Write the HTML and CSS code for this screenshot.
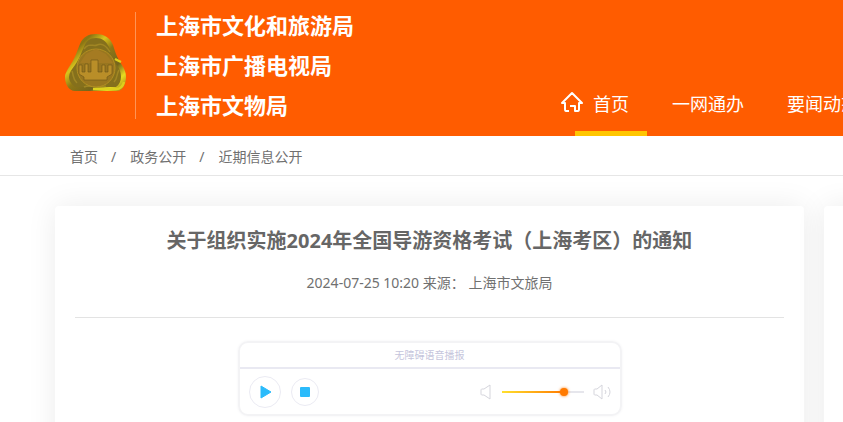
FILE: index.html
```html
<!DOCTYPE html>
<html lang="zh-CN">
<head>
  <meta charset="UTF-8" />
  <title>关于组织实施2024年全国导游资格考试（上海考区）的通知</title>
  <link rel="stylesheet" href="styles.css">
</head>
<body>
  <header class="header">
    <svg class="logo" viewBox="0 0 62 58" width="62" height="58" aria-hidden="true">
      <defs>
        <linearGradient id="gold" x1="0" y1="0" x2="1" y2="1">
          <stop offset="0" stop-color="#b3920f" />
          <stop offset=".22" stop-color="#8a7414" />
          <stop offset=".36" stop-color="#d9c41c" />
          <stop offset=".5" stop-color="#8f7716" />
          <stop offset=".7" stop-color="#75651c" />
          <stop offset=".84" stop-color="#e8dc20" />
          <stop offset="1" stop-color="#8e7415" />
        </linearGradient>
      </defs>
      <path d="M16 10C19 3 24 0 32 0c9 0 14 4 17 11 2 6 3 10 7 17 4 6 6 10 6 15 0 6-3 14-9 14H11C5 57 1 50 1 43c0-4 3-8 6-13 5-8 6-13 9-20z" fill="url(#gold)" />
      <path d="M20 13c2-6 6-9 12-9s10 3 13 9c2 7 4 12 7 17 4 5 5 9 5 13s-2 8-5 10H12c-4-2-7-6-7-10s3-8 6-12c5-7 6-12 9-18z" fill="#85701c" />
      <path d="M20 15c5-7 9-2 13-4s9 0 13 7M8 37c2 5 0 7 5 12M55 36c-3 5-1 8-5 12M20 53c5-3 14 1 22-1" fill="none" stroke="#a08624" stroke-width="1.5" />
      <circle cx="32" cy="34" r="19" fill="#99761f" stroke="#b38f22" />
      <path d="M16 29l6-9 10-5 10 5 7 9z" fill="#a57b22" />
      <path d="M15 40V31h3v7h3v-8h3v8h3V26h7v12h4v-7h3v7h3v-7h4v9l-5 3v3H20v-3z" fill="#b98e28" stroke="#6a5418" stroke-width=".6" />
      <path d="M51 25l6 3M29 55l23 0c4 0 7-3 8-7" fill="none" stroke="#ddd01c" stroke-width="2.5" />
    </svg>
    <div class="brand">
      <div>上海市文化和旅游局</div>
      <div>上海市广播电视局</div>
      <div>上海市文物局</div>
    </div>
    <nav class="nav">
      <svg class="home-icon" viewBox="0 0 22 22" width="22" height="22" aria-hidden="true">
        <path d="M8 20H5c-1 0-1-1-1-2v-6H1L11 2l10 10h-3v6c0 1 0 2-1 2h-3v-5H9" />
      </svg>
      <a class="active" href="#">首页</a>
      <a href="#">一网通办</a>
      <a href="#">要闻动态</a>
    </nav>
  </header>

  <nav class="crumbs">
    <a href="#">首页</a><span>/</span><a href="#">政务公开</a><span>/</span><a href="#">近期信息公开</a>
  </nav>

  <div class="content">
    <main class="card">
      <h1>关于组织实施2024年全国导游资格考试（上海考区）的通知</h1>
      <p class="meta">2024-07-25 10:20 来源： 上海市文旅局</p>
      <hr>
      <section class="player">
        <div class="player-title">无障碍语音播报</div>
        <div class="player-bar">
          <button class="play" type="button" aria-label="播放">
            <svg viewBox="0 0 12 14" width="12" height="14"><path d="M1 1l10 6-10 6z" fill="#2bbbfb" stroke="#2bbbfb" stroke-linejoin="round" /></svg>
          </button>
          <button class="stop" type="button" aria-label="停止">
            <svg viewBox="0 0 10 10" width="10" height="10"><rect width="10" height="10" rx="1" fill="#2bbbfb" /></svg>
          </button>
          <svg class="speaker" viewBox="0 0 12 16" width="12" height="16" aria-hidden="true"><path d="M2 5h2l6-4v14l-6-4H2c-1 0-1-1-1-1V6s0-1 1-1z" /></svg>
          <input type="range" min="0" max="100" value="79" aria-label="音量">
          <svg class="speaker" viewBox="0 0 18 16" width="18" height="16" aria-hidden="true"><path d="M2 5h2l5-4v14l-5-4H2c-1 0-1-1-1-1V6s0-1 1-1zM12 6q2 2 0 4M15 3q4 5 0 10" /></svg>
        </div>
      </section>
    </main>
    <aside class="card"></aside>
  </div>
</body>
</html>
```

FILE: styles.css
```css
* {
  box-sizing: border-box;
}
body {
  margin: 0;
  background: #fff;
  color: #666;
  font-family: "Noto Sans", "Noto Sans CJK SC", sans-serif;
  font-size: 14px;
  overflow: hidden;
}
a {
  color: inherit;
  text-decoration: none;
}

.header {
  display: flex;
  align-items: stretch;
  height: 136px;
  padding-left: 64px;
  background: #ff5c00;
  color: #fff;
  white-space: nowrap;
}
.logo {
  flex: none;
  margin-top: 34px;
}
.brand {
  flex: none;
  width: 426px;
  height: 107px;
  margin: 12px 0 0 9px;
  padding-left: 20px;
  border-left: 1px solid #ff9455;
  font-size: 22px;
  font-weight: bold;
  line-height: 40px;
}
.brand div:first-child {
  margin-top: -7px;
}

.nav {
  display: flex;
  align-items: flex-end;
  font-size: 18px;
}
.nav a {
  margin-right: 7px;
  padding: 0 18px;
  height: 46px;
  line-height: 28px;
}
.nav a.active {
  margin-left: -8px;
  border-bottom: 5px solid #ffc600;
}
.home-icon {
  margin-bottom: 23px;
  fill: none;
  stroke: #fff;
  stroke-width: 2;
  stroke-linejoin: round;
}

.crumbs {
  height: 40px;
  padding-left: 70px;
  border-bottom: 1px solid #e6e6e6;
  color: #707070;
  line-height: 41px;
}
.crumbs span {
  margin: 0 14px 0 13px;
}

/* the side column runs past the right edge */
.content {
  display: grid;
  grid-template-columns: 1fr 300px;
  gap: 20px;
  margin: 30px -281px 0 55px;
}
.card {
  min-height: 260px;
  padding: 20px;
  background: #fff;
  border-radius: 4px;
  box-shadow: 0 0 30px rgba(0, 0, 0, 0.08);
}
h1 {
  margin: 0;
  font-size: 20px;
  line-height: 30px;
  text-align: center;
}
.meta {
  margin: 17px 0 24px;
  color: #707070;
  line-height: 20px;
  text-align: center;
}
hr {
  margin: 0;
  border: 0;
  border-top: 1px solid #e3e3e3;
}

.player {
  width: 384px;
  margin: 23px auto 0;
  border: 2px solid #f3f3f5;
  border-radius: 10px;
  box-shadow: 0 0 3px #f3f3f5;
}
.player-title {
  height: 26px;
  border-bottom: 2px solid #e9e9f2;
  color: #c5c5dc;
  font-size: 10px;
  line-height: 24px;
  text-align: center;
}
.player-bar {
  display: flex;
  align-items: center;
  height: 45px;
  padding: 0 9px;
}
.player button {
  display: flex;
  align-items: center;
  justify-content: center;
  width: 28px;
  height: 28px;
  margin-right: auto;
  padding: 0;
  border: 1px solid #ebebf3;
  border-radius: 50%;
  background: #fff;
}
.player .play {
  width: 32px;
  height: 32px;
  margin-right: 10px;
  padding-left: 2px;
}
.speaker {
  fill: none;
  stroke: #d5d5dc;
  stroke-width: 1;
}
input[type="range"] {
  width: 82px;
  height: 10px;
  margin: 0 9px 0 10px;
  appearance: none;
  background: linear-gradient(to right, #ffe02e, #ff7a00 76%, #e6e6ec 76%) center / 100% 2px no-repeat;
}
input[type="range"]::-webkit-slider-thumb {
  appearance: none;
  width: 8px;
  height: 8px;
  border-radius: 50%;
  background: #ff7a00;
  box-shadow: 0 0 3px #ff7a00;
}
```
